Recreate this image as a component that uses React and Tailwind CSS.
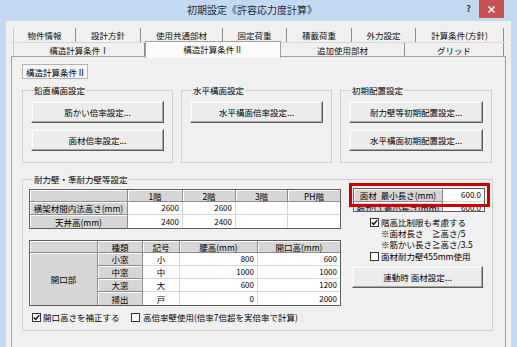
import React from "react";

function Check({ checked }) {
  return (
    <span className="w-[9px] h-[9px] border border-[#333333] bg-white flex items-center justify-center shrink-0">
      {checked && (
        <svg width="7" height="7" viewBox="0 0 7 7">
          <path d="M0.8 3.4 L2.7 5.4 L6.2 1.2" stroke="#111" strokeWidth="1.4" fill="none" />
        </svg>
      )}
    </span>
  );
}

function Btn({ children, className = "" }) {
  return (
    <div
      className={
        "h-[22px] flex items-center justify-center bg-[#ececec] border border-t-[#f4f4f4] border-l-[#f4f4f4] border-r-[#5c5c5c] border-b-[#5c5c5c] shadow-[inset_-1px_-1px_0_#a6a6a6,inset_1px_1px_0_#ffffff] text-[8.5px] leading-[10px] " +
        className
      }
    >
      {children}
    </div>
  );
}

function Tab({ w, children, first }) {
  return (
    <div
      className={
        "h-full flex items-center justify-center border-r border-[#8e8e8e] text-[8.5px] leading-[10px] text-[#111] " +
        (first ? "border-l border-l-[#c8c8c8] " : "") +
        w
      }
    >
      {children}
    </div>
  );
}

const H = "bg-[#d6d6d6] border-r border-b border-[#8c8c8c] shadow-[inset_1px_1px_0_#ffffff] flex items-center justify-center text-[8.5px] leading-[10px]";
const D = "bg-white border-r border-b border-[#d6d6d6] flex items-center justify-end pr-[3px] text-[8px] leading-[10px]";
const DC = "bg-white border-r border-b border-[#d6d6d6] flex items-center justify-center text-[8.5px] leading-[10px]";

export default function App() {
  return (
    <div className="w-[517px] h-[347px] bg-[#c3d9f1] flex flex-col overflow-hidden font-['Noto_Sans_CJK_JP','Noto_Sans',sans-serif] text-black">
      {/* title bar */}
      <div className="h-[21px] flex shrink-0">
        <div className="flex-1" />
        <div className="pt-[4px] text-[10px] leading-[12px] text-[#2a2a2a]">初期設定《許容応力度計算》</div>
        <div className="flex-1 flex justify-end pr-[13px]">
          <div className="pt-[3px] mr-[8px] text-[9px] leading-[11px] font-bold text-[#333]">?</div>
          <div className="w-[25px] h-[18px] bg-[#c75050] flex items-center justify-center">
            <svg width="7" height="7" viewBox="0 0 7 7">
              <path d="M0.5 0.5 L6.5 6.5 M6.5 0.5 L0.5 6.5" stroke="#fff" strokeWidth="1.5" />
            </svg>
          </div>
        </div>
      </div>

      {/* client */}
      <div className="mx-[6px] flex-1 bg-[#f0f0f0] flex flex-col">
        <div className="ml-[5px] mt-[7px] w-[495px] flex flex-col">
          {/* tab row 1 */}
          <div className="flex pl-[2px] h-[14px]">
            <Tab w="w-[63px]" first>物件情報</Tab>
            <Tab w="w-[65px]">設計方針</Tab>
            <Tab w="w-[82px]">使用共通部材</Tab>
            <Tab w="w-[64px]">固定荷重</Tab>
            <Tab w="w-[65px]">積載荷重</Tab>
            <Tab w="w-[64px]">外力設定</Tab>
            <Tab w="w-[88px]">計算条件(方針)</Tab>
          </div>
          {/* tab row 2 */}
          <div className="flex pl-[2px] h-[14px] border-t border-[#d8d8d8]">
            <Tab w="w-[132px]" first>構造計算条件Ⅰ</Tab>
            <div className="w-[136px] h-[17px] -mt-[2px] relative z-10 bg-[#fbfbfb] border-x border-t border-[#a0a0a0] flex items-center justify-center text-[8.5px] leading-[10px] text-[#111] pb-[2px]">
              構造計算条件Ⅱ
            </div>
            <Tab w="w-[124px]">追加使用部材</Tab>
            <Tab w="w-[99px]">グリッド</Tab>
          </div>

          {/* tab page */}
          <div className="h-[300px] border border-[#a0a0a0] bg-[#f0f0f0] pl-[10px] pt-[7px] flex flex-col">
            <div className="w-[66px] h-[15px] border border-[#b4b4b4] bg-[#f6f6f6] flex items-center pl-[3px] text-[8.5px] leading-[10px]">
              構造計算条件Ⅱ
            </div>

            <div className="flex mt-[6px]">
              <fieldset className="w-[151px] h-[78px] border border-[#d0d0d0] px-[8px] flex flex-col">
                <legend className="ml-[2px] px-[1px] text-[8.5px] leading-[10px]">鉛直構面設定</legend>
                <Btn className="mt-[6px] border-[#3a3a3a]">筋かい倍率設定...</Btn>
                <Btn className="mt-[6px]">面材倍率設定...</Btn>
              </fieldset>
              <fieldset className="ml-[8px] w-[151px] h-[78px] border border-[#d0d0d0] px-[8px] flex flex-col">
                <legend className="ml-[2px] px-[1px] text-[8.5px] leading-[10px]">水平構面設定</legend>
                <Btn className="mt-[6px]">水平構面倍率設定...</Btn>
              </fieldset>
              <fieldset className="ml-[8px] w-[152px] h-[78px] border border-[#d0d0d0] px-[8px] flex flex-col">
                <legend className="ml-[2px] px-[1px] text-[8.5px] leading-[10px]">初期配置設定</legend>
                <Btn className="mt-[6px]">耐力壁等初期配置設定...</Btn>
                <Btn className="mt-[6px]">水平構面初期配置設定...</Btn>
              </fieldset>
            </div>

            <fieldset className="mt-[11px] w-[471px] h-[157px] border border-[#d0d0d0] pl-[6px] pt-[5px]">
              <legend className="ml-[4px] px-[1px] text-[8.5px] leading-[10px]">耐力壁・準耐力壁等設定</legend>
              <div className="flex">
                {/* left column */}
                <div className="w-[312px] flex flex-col">
                  <div className="grid grid-cols-[98px_55px_53px_52px_52px] grid-rows-[12px_13px_13px] border border-[#5e5e5e]">
                    <div className={H}></div>
                    <div className={H}>1階</div>
                    <div className={H}>2階</div>
                    <div className={H}>3階</div>
                    <div className={H + " border-r-0"}>PH階</div>
                    <div className={H}>横架材間内法高さ(mm)</div>
                    <div className={D}>2600</div>
                    <div className={D}>2600</div>
                    <div className={D}></div>
                    <div className={D + " border-r-0"}></div>
                    <div className={H + " border-b-0"}>天井高(mm)</div>
                    <div className={D + " border-b-0"}>2400</div>
                    <div className={D + " border-b-0"}>2400</div>
                    <div className={D + " border-b-0"}></div>
                    <div className={D + " border-b-0 border-r-0"}></div>
                  </div>

                  <div className="mt-[11px] grid grid-cols-[68px_45px_37px_78px_82px] grid-rows-[12px_13px_13px_13px_13px] border border-[#5e5e5e]">
                    <div className={H}></div>
                    <div className={H}>種類</div>
                    <div className={H}>記号</div>
                    <div className={H}>腰高(mm)</div>
                    <div className={H + " border-r-0"}>開口高(mm)</div>

                    <div className={H + " row-span-4 border-b-0"}>開口部</div>
                    <div className={H}>小窓</div>
                    <div className={DC}>小</div>
                    <div className={D}>800</div>
                    <div className={D + " border-r-0"}>600</div>

                    <div className={H}>中窓</div>
                    <div className={DC}>中</div>
                    <div className={D}>1000</div>
                    <div className={D + " border-r-0"}>1000</div>

                    <div className={H}>大窓</div>
                    <div className={DC}>大</div>
                    <div className={D}>600</div>
                    <div className={D + " border-r-0"}>1200</div>

                    <div className={H + " border-b-0"}>掃出</div>
                    <div className={DC + " border-b-0"}>戸</div>
                    <div className={D + " border-b-0"}>0</div>
                    <div className={D + " border-b-0 border-r-0"}>2000</div>
                  </div>

                  <div className="flex items-center mt-[6px] h-[10px] text-[8.5px] leading-[10px]">
                    <div className="ml-[3px] w-[99px] flex items-center gap-[2px]">
                      <Check checked />
                      <span>開口高さを補正する</span>
                    </div>
                    <div className="flex items-center gap-[3px]">
                      <Check />
                      <span>高倍率壁使用(倍率7倍超を実倍率で計算)</span>
                    </div>
                  </div>
                </div>

                {/* right column */}
                <div className="ml-[12px] w-[132px] flex flex-col -mt-[1px] text-[8.5px] leading-[10px]">
                  <div className="relative w-[132px] h-[24px]">
                    <div className="w-[132px] h-[24px] border border-[#5e5e5e] overflow-hidden grid grid-cols-[89px_41px] grid-rows-[13px_13px]">
                      <div className={H}>面材&nbsp;&nbsp;最小長さ(mm)</div>
                      <div className={D + " border-r-0"}>600.0</div>
                      <div className={H}>筋かい&nbsp;最小長さ(mm)</div>
                      <div className={D + " border-r-0"}>600.0</div>
                    </div>
                    <div className="absolute -left-[4px] -top-[5px] w-[141px] h-[24px] border-[3px] border-[#cc0000]" />
                  </div>

                  <div className="flex items-center gap-[2px] pl-[17px] mt-[5px] h-[10px]">
                    <Check checked />
                    <span>階高比制限も考慮する</span>
                  </div>
                  <div className="pl-[28px] mt-[1px] leading-[11px]">※面材長さ　≧高さ/5</div>
                  <div className="pl-[28px] leading-[11px]">※筋かい長さ≧高さ/3.5</div>
                  <div className="flex items-center gap-[2px] pl-[17px] mt-[1px] h-[10px]">
                    <Check />
                    <span>面材耐力壁455mm使用</span>
                  </div>
                  <Btn className="mt-[5px] w-[131px] -ml-px">連動時 面材設定...</Btn>
                </div>
              </div>
            </fieldset>
          </div>
        </div>
      </div>
    </div>
  );
}
